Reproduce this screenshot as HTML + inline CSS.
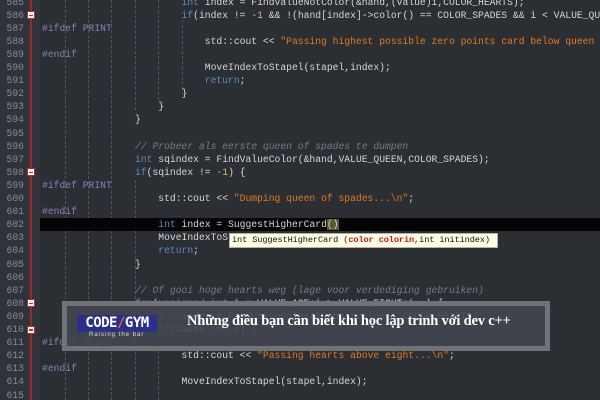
<!DOCTYPE html>
<html><head><meta charset="utf-8"><style>
*{margin:0;padding:0;box-sizing:border-box}
html,body{width:600px;height:400px;overflow:hidden}
body{background:#2b2e33;position:relative;font-family:"Liberation Mono",monospace;font-size:9.7px;color:#d6d6d6}
#wrap{position:absolute;left:0;top:0;width:600px;height:400px;overflow:hidden}
.gut{position:absolute;left:0;top:0;width:40px;height:400px;background:#30343a}
.red{position:absolute;left:30px;top:0;width:2px;height:400px;background:#9a2a26}
.ln{position:absolute;left:0;width:24px;text-align:right;color:#858b92;height:13.1px;line-height:13.1px}
.cl{position:absolute;left:42px;width:558px;overflow:hidden;white-space:pre;height:13.1px;line-height:13.1px}
.k{color:#5b8cc0}.s{color:#e07a22}.c{color:#767c84;font-style:italic}.p{color:#8d80b4}.n{color:#d9b860}
.fold{position:absolute;left:27px;width:8px;height:8px;background:#fff;border:1px solid #b03030}
.fold:after{content:"";position:absolute;left:1px;top:2.5px;width:4px;height:1.5px;background:#b03030}
.g{position:absolute;width:0;border-left:1px dashed #50555c}
.hl{position:absolute;left:40px;top:218px;width:560px;height:13px;background:#050505}
.tip{position:absolute;left:229px;top:233px;width:269px;height:15px;background:#fffde3;border:1px solid #b5b29a;color:#111;white-space:pre;line-height:13px;padding-left:2px;font-size:8.6px;letter-spacing:-0.1px;overflow:hidden}
.box{position:absolute;left:62px;top:301px;width:488px;height:50px;border:5px solid rgba(120,123,128,.85);background:rgba(66,70,78,.9)}
.logo{position:absolute;left:77px;top:315px;width:80px;height:17px;background:#2b2f8c;color:#fff;font-family:"DejaVu Sans Mono",monospace;font-weight:bold;font-size:14px;line-height:17px;text-align:center;letter-spacing:-0.5px;overflow:hidden}
.tag{position:absolute;left:89px;top:332px;color:#ddd;font-size:6px;letter-spacing:1px;font-family:"Liberation Sans",sans-serif;white-space:nowrap}
.title{position:absolute;left:187px;top:313px;color:#fff;font-family:"Liberation Serif",serif;font-weight:bold;font-size:14.5px;letter-spacing:-0.2px;white-space:nowrap}
</style></head><body><div id="wrap">
<div class="gut"></div><div class="red"></div>
<div class="g" style="left:65px;top:0;height:400px"></div>
<div class="g" style="left:88px;top:0;height:400px"></div>
<div class="g" style="left:111px;top:0;height:400px"></div>
<div class="g" style="left:135px;top:0;height:110px"></div>
<div class="g" style="left:158px;top:0;height:100px"></div>
<div class="g" style="left:182px;top:20px;height:75px"></div>
<div class="g" style="left:135px;top:180px;height:220px"></div>
<div class="g" style="left:158px;top:340px;height:60px"></div>
<div class="hl"></div>
<div id="code"></div>
<div class="tip">int SuggestHigherCard (<b style="color:#c8141e">color colorin</b>,int initindex)</div>
<div class="box"></div>
<div class="logo">CODE<span style="color:#e8602a">/</span>GYM</div>
<div class="tag">Raising the bar</div>
<div class="title">Những điều bạn cần biết khi học lập trình với dev c++</div>
</div>
<script>
var L=[
[585,'                        <span class="k">int</span> index = FindValueNotColor(&amp;hand,(value)i,COLOR_HEARTS);'],
[586,'                        <span class="k">if</span>(index != <span class="n">-1</span> &amp;&amp; !(hand[index]->color() == COLOR_SPADES &amp;&amp; i &lt; VALUE_QUEEN',1],
[587,'<span class="p">#ifdef PRINT</span>'],
[588,'                            std::cout &lt;&lt; <span class="s">"Passing highest possible zero points card below queen of spades"</span>'],
[589,'<span class="p">#endif</span>'],
[590,'                            MoveIndexToStapel(stapel,index);'],
[591,'                            <span class="k">return</span>;'],
[592,'                        }'],
[593,'                    }'],
[594,'                }'],
[595,''],
[596,'                <span class="c">// Probeer als eerste queen of spades te dumpen</span>'],
[597,'                <span class="k">int</span> sqindex = FindValueColor(&amp;hand,VALUE_QUEEN,COLOR_SPADES);'],
[598,'                <span class="k">if</span>(sqindex != <span class="n">-1</span>) {',1],
[599,'<span class="p">#ifdef PRINT</span>'],
[600,'                    std::cout &lt;&lt; <span class="s">"Dumping queen of spades...\\n"</span>;'],
[601,'<span class="p">#endif</span>'],
[602,'                    <span class="k">int</span> index = SuggestHigherCard<span style="background:#5a5a30">()</span>'],
[603,'                    MoveIndexToS'],
[604,'                    <span class="k">return</span>;'],
[605,'                }'],
[606,''],
[607,'                <span class="c">// Of gooi hoge hearts weg (lage voor verdediging gebruiken)</span>'],
[608,'                <span class="k">for</span>(<span class="k">unsigned int</span> i = VALUE_ACE;i &gt; VALUE_EIGHT;i--) {',1],
[609,'                    <span class="k">int</span> index = FindValueColor(&amp;hand,(value)i,COLOR_HEARTS);'],
[610,'                    <span class="k">if</span>(index != <span class="n">-1</span>) {',1],
[611,'<span class="p">#ifdef PRINT</span>'],
[612,'                        std::cout &lt;&lt; <span class="s">"Passing hearts above eight...\\n"</span>;'],
[613,'<span class="p">#endif</span>'],
[614,'                        MoveIndexToStapel(stapel,index);'],
[615,'']];
var h='';L.forEach(function(l,i){var t=-4.5+i*13.1;h+='<div class="ln" style="top:'+t+'px">'+l[0]+'</div><div class="cl" style="top:'+t+'px">'+l[1]+'</div>';if(l[2])h+='<div class="fold" style="top:'+(t+2.5)+'px"></div>';});
document.getElementById('code').innerHTML=h;
</script>
</body></html>
